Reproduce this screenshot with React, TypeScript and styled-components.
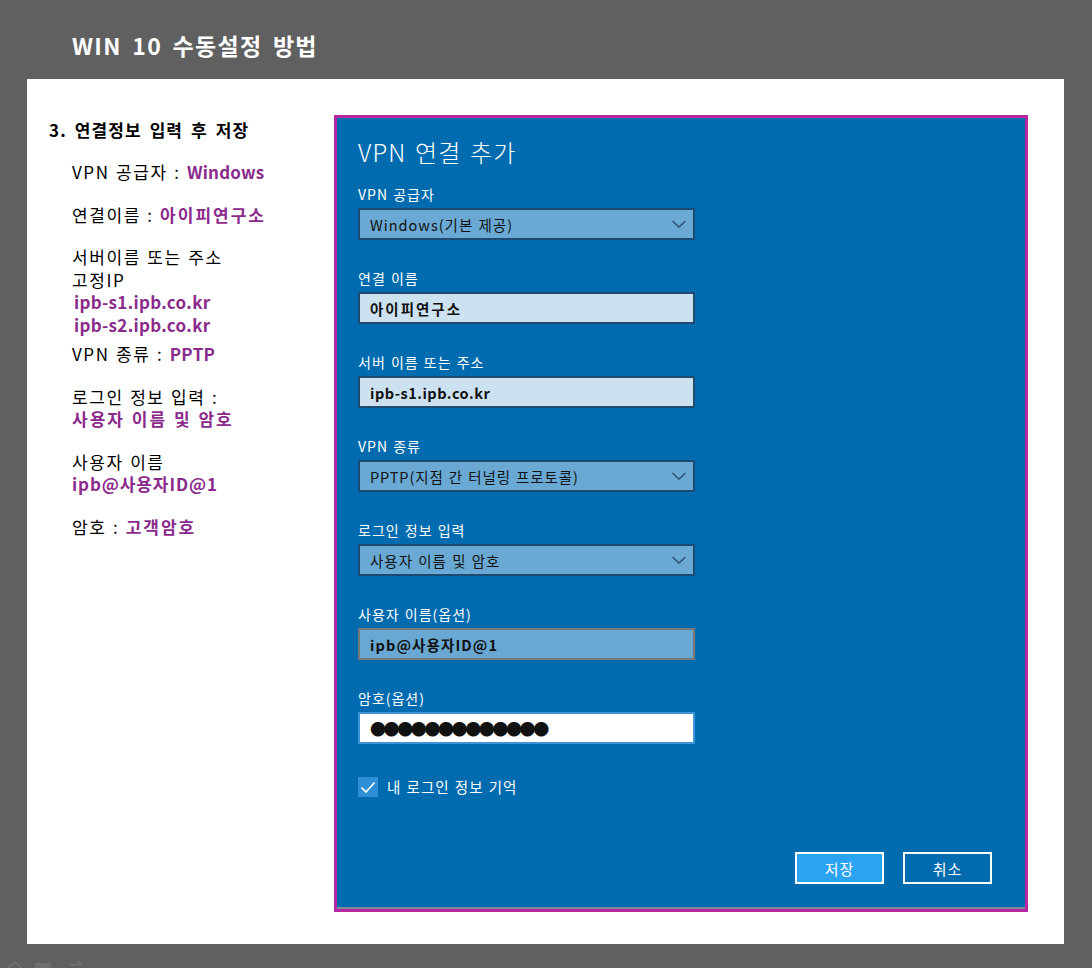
import styled, { createGlobalStyle } from "styled-components";

const GlobalStyle = createGlobalStyle`
  html, body {
    margin: 0;
    padding: 0;
    background: #606060;
  }
  body {
    font-family: "Noto Sans CJK KR", "Noto Sans", sans-serif;
  }
`;

type GuideLineData = { label?: string; value?: string; spacing?: number; indent?: boolean };

const guide: { lines: GuideLineData[]; tight?: boolean }[] = [
  { lines: [{ label: "VPN 공급자 : ", value: "Windows", spacing: 0.2 }] },
  { lines: [{ label: "연결이름 : ", value: "아이피연구소" }] },
  {
    lines: [
      { label: "서버이름 또는 주소" },
      { label: "고정IP" },
      { value: "ipb-s1.ipb.co.kr", spacing: 0.3, indent: true },
      { value: "ipb-s2.ipb.co.kr", spacing: 0.3, indent: true },
    ],
  },
  { lines: [{ label: "VPN 종류 : ", value: "PPTP", spacing: 0.3 }], tight: true },
  { lines: [{ label: "로그인 정보 입력 :" }, { value: "사용자 이름 및 암호" }] },
  { lines: [{ label: "사용자 이름" }, { value: "ipb@사용자ID@1", spacing: 0.9 }] },
  { lines: [{ label: "암호 : ", value: "고객암호" }] },
];

type FieldKind = "select" | "input" | "disabled" | "password";

const fields: { label: string; value: string; kind: FieldKind; spacing: number }[] = [
  { label: "VPN 공급자", value: "Windows(기본 제공)", kind: "select", spacing: 1 },
  { label: "연결 이름", value: "아이피연구소", kind: "input", spacing: 2 },
  { label: "서버 이름 또는 주소", value: "ipb-s1.ipb.co.kr", kind: "input", spacing: 0.5 },
  { label: "VPN 종류", value: "PPTP(지점 간 터널링 프로토콜)", kind: "select", spacing: 0.9 },
  { label: "로그인 정보 입력", value: "사용자 이름 및 암호", kind: "select", spacing: 1 },
  { label: "사용자 이름(옵션)", value: "ipb@사용자ID@1", kind: "disabled", spacing: 1.1 },
  { label: "암호(옵션)", value: "●●●●●●●●●●●●●", kind: "password", spacing: -2.4 },
];

const App = () => {
  return (
    <>
      <GlobalStyle />
      <Page>
        <Header>WIN 10 수동설정 방법</Header>
        <Panel>
          <Guide>
            <StepTitle>3. 연결정보 입력 후 저장</StepTitle>
            {guide.map((group, i) => (
              <GuideGroup key={i} $tight={!!group.tight}>
                {group.lines.map((line, j) => (
                  <GuideLine key={j} $indent={!!line.indent}>
                    {line.label}
                    {line.value && <Accent $spacing={line.spacing ?? 2}>{line.value}</Accent>}
                  </GuideLine>
                ))}
              </GuideGroup>
            ))}
          </Guide>

          <Dialog>
            <DialogTitle>VPN 연결 추가</DialogTitle>
            <Fields>
              {fields.map((f) => (
                <Field key={f.label}>
                  <FieldLabel>{f.label}</FieldLabel>
                  <Box $kind={f.kind}>
                    <BoxText $kind={f.kind} $spacing={f.spacing}>
                      {f.value}
                    </BoxText>
                    {f.kind === "select" && (
                      <svg width="16" height="10" viewBox="0 0 16 10">
                        <path d="M1.5 2 L8 8 L14.5 2" fill="none" stroke="#2d4f6c" strokeWidth="1.3" />
                      </svg>
                    )}
                  </Box>
                </Field>
              ))}
            </Fields>
            <Remember>
              <Check>
                <svg width="16" height="13" viewBox="0 0 16 13">
                  <path d="M1.5 6.5 L6 11 L14.5 1.5" fill="none" stroke="#fff" strokeWidth="1.6" />
                </svg>
              </Check>
              <span>내 로그인 정보 기억</span>
            </Remember>
            <Buttons>
              <Button $primary>저장</Button>
              <Button>취소</Button>
            </Buttons>
          </Dialog>
        </Panel>
        <Footer>
          <svg width="90" height="8" viewBox="0 0 90 8">
            <path d="M4 8 L11 2 L18 8" fill="none" stroke="#6f6f6f" strokeWidth="2" />
            <rect x="31" y="3" width="16" height="5" fill="#6f6f6f" />
            <path d="M66 5 H78 M73 1 L78 5" fill="none" stroke="#6f6f6f" strokeWidth="2" />
          </svg>
        </Footer>
      </Page>
    </>
  );
};

const Page = styled.div`
  width: 1092px;
  height: 968px;
  display: flex;
  flex-direction: column;
  overflow: hidden;
`;

const Header = styled.div`
  height: 79px;
  box-sizing: border-box;
  padding: 29px 0 0 72px;
  color: #fff;
  font-size: 23px;
  font-weight: 700;
  line-height: 32px;
  letter-spacing: 1.3px;
  word-spacing: 4px;
`;

const Panel = styled.div`
  margin-left: 27px;
  width: 1037px;
  height: 865px;
  background: #fff;
  box-sizing: border-box;
  padding: 36px 0 0 22px;
  display: flex;
  align-items: flex-start;
`;

const Guide = styled.div`
  width: 285px;
  padding-top: 4px;
  color: #000;
`;

const StepTitle = styled.div`
  font-size: 17px;
  font-weight: 700;
  line-height: 22px;
  letter-spacing: 1.1px;
  word-spacing: 3px;
  margin-bottom: 20px;
`;

const GuideGroup = styled.div<{ $tight: boolean }>`
  padding-left: 23px;
  margin-top: ${({ $tight }) => ($tight ? "-13px" : "0")};
  margin-bottom: 20px;
`;

const GuideLine = styled.div<{ $indent: boolean }>`
  font-size: 17px;
  line-height: 22.5px;
  letter-spacing: 1.6px;
  word-spacing: 1px;
  padding-left: ${({ $indent }) => ($indent ? "2px" : "0")};
  white-space: nowrap;
`;

const Accent = styled.span<{ $spacing: number }>`
  color: #8a2b8c;
  font-weight: 700;
  letter-spacing: ${({ $spacing }) => $spacing}px;
`;

const Dialog = styled.div`
  width: 694px;
  height: 797px;
  box-sizing: border-box;
  border: 3px solid #b7279f;
  box-shadow: inset 0 -2px 0 #7d8a99;
  background: #006bae;
  color: #fff;
  padding: 18px 0 25px 21px;
  display: flex;
  flex-direction: column;
`;

const DialogTitle = styled.div`
  font-size: 24px;
  font-weight: 300;
  line-height: 32px;
  letter-spacing: 1.2px;
  word-spacing: 2px;
  margin-bottom: 16px;
`;

const Fields = styled.div`
  display: flex;
  flex-direction: column;
  gap: 28px;
`;

const Field = styled.div`
  display: flex;
  flex-direction: column;
  gap: 4px;
`;

const FieldLabel = styled.div`
  font-size: 14px;
  line-height: 20px;
  letter-spacing: 1px;
  word-spacing: 1px;
`;

const boxFill: Record<FieldKind, string> = {
  select: "#69a9d3",
  input: "#cde2f0",
  disabled: "#68a8d2",
  password: "#ffffff",
};

const boxBorder: Record<FieldKind, string> = {
  select: "#1b4a72",
  input: "#1f4b70",
  disabled: "#787878",
  password: "#3d94d8",
};

const Box = styled.div<{ $kind: FieldKind }>`
  width: 337px;
  height: 32px;
  box-sizing: border-box;
  border: 2px solid ${({ $kind }) => boxBorder[$kind]};
  background: ${({ $kind }) => boxFill[$kind]};
  display: flex;
  align-items: center;
  justify-content: space-between;
  padding: 0 4px 0 10px;

  svg {
    margin-right: 2px;
  }
`;

const BoxText = styled.span<{ $kind: FieldKind; $spacing: number }>`
  color: #111;
  font-size: ${({ $kind }) => ($kind === "password" ? "16px" : "14.5px")};
  font-weight: ${({ $kind }) => ($kind === "select" ? 400 : 600)};
  letter-spacing: ${({ $spacing }) => $spacing}px;
  word-spacing: 1px;
  white-space: nowrap;
`;

const Remember = styled.div`
  margin-top: 33px;
  display: flex;
  align-items: center;
  gap: 9px;
  font-size: 14.5px;
  line-height: 20px;
  letter-spacing: 1px;
  word-spacing: 1px;
`;

const Check = styled.div`
  width: 20px;
  height: 20px;
  background: #2e8ed6;
  display: flex;
  align-items: center;
  justify-content: center;
`;

const Buttons = styled.div`
  margin-top: auto;
  align-self: flex-end;
  margin-right: 33px;
  display: flex;
  gap: 19px;
`;

const Button = styled.div<{ $primary?: boolean }>`
  width: 89px;
  height: 32px;
  box-sizing: border-box;
  border: 2px solid #fff;
  background: ${({ $primary }) => ($primary ? "#29a3f2" : "#006bae")};
  color: #fff;
  font-size: 15px;
  letter-spacing: 1px;
  display: flex;
  align-items: center;
  justify-content: center;
`;

const Footer = styled.div`
  flex: 1;
  display: flex;
  align-items: flex-end;
  padding-left: 4px;
  line-height: 0;
`;

export default App;
